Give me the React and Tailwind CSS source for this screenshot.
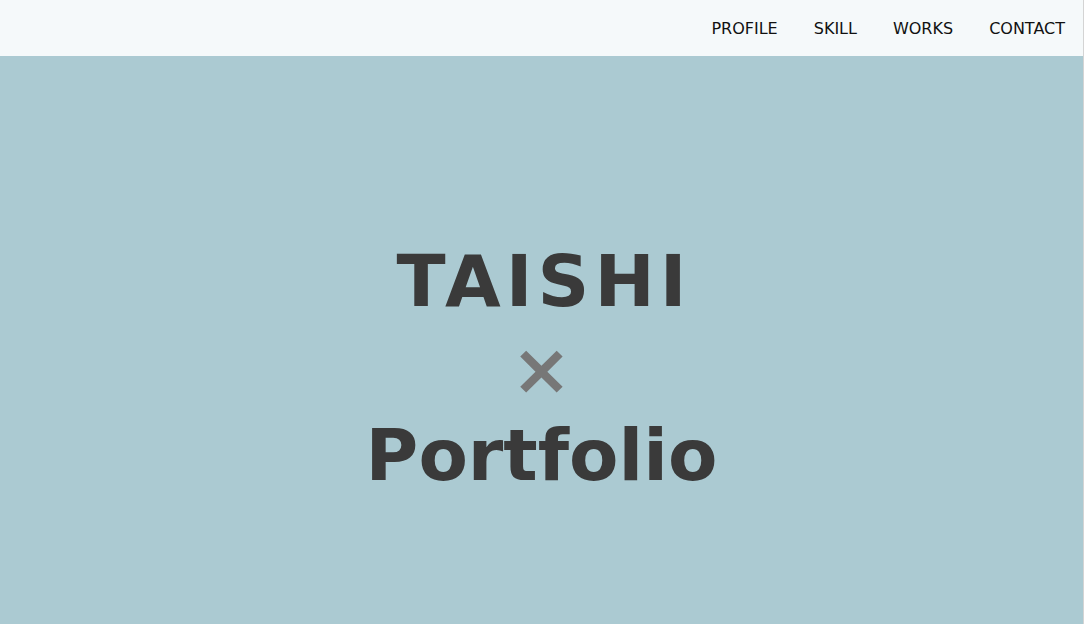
export default function App() {
  const links = ['PROFILE', 'SKILL', 'WORKS', 'CONTACT'];
  return (
    <div className="w-[1084px] border-r border-[#d4d4d4] bg-white font-['DejaVu_Sans',sans-serif]">
      <header className="h-14 bg-[#f5f9fa] flex items-center justify-end pr-[18px] pt-0.5">
        <nav className="flex gap-9">
          {links.map((l) => (
            <a key={l} href="#" className="text-[16px] text-[#111]">
              {l}
            </a>
          ))}
        </nav>
      </header>
      <main className="h-[568px] pt-14 bg-[#abcad2] flex flex-col items-center justify-center text-[#3a3a3a] font-bold">
        <h1 className="text-[72px] leading-[88px] tracking-[5px] pl-[5px]">TAISHI</h1>
        <p className="text-[72px] leading-[88px] text-[#777]">×</p>
        <h1 className="text-[72px] leading-[88px] -mt-0.5">Portfolio</h1>
      </main>
    </div>
  );
}
